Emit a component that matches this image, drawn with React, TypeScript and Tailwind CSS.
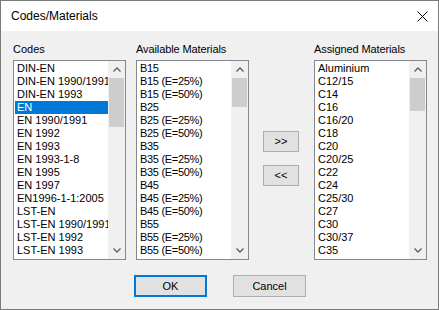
import React from "react";

const codes = [
  "DIN-EN",
  "DIN-EN 1990/1991",
  "DIN-EN 1993",
  "EN",
  "EN 1990/1991",
  "EN 1992",
  "EN 1993",
  "EN 1993-1-8",
  "EN 1995",
  "EN 1997",
  "EN1996-1-1:2005",
  "LST-EN",
  "LST-EN 1990/1991",
  "LST-EN 1992",
  "LST-EN 1993",
];

const available = [
  "B15",
  "B15 (E=25%)",
  "B15 (E=50%)",
  "B25",
  "B25 (E=25%)",
  "B25 (E=50%)",
  "B35",
  "B35 (E=25%)",
  "B35 (E=50%)",
  "B45",
  "B45 (E=25%)",
  "B45 (E=50%)",
  "B55",
  "B55 (E=25%)",
  "B55 (E=50%)",
];

const assigned = [
  "Aluminium",
  "C12/15",
  "C14",
  "C16",
  "C16/20",
  "C18",
  "C20",
  "C20/25",
  "C22",
  "C24",
  "C25/30",
  "C27",
  "C30",
  "C30/37",
  "C35",
];

function Chevron({ up }: { up?: boolean }) {
  return (
    <svg width="8" height="5" viewBox="0 0 8 5">
      <polyline
        points={up ? "0.5,4.5 4,1 7.5,4.5" : "0.5,0.5 4,4 7.5,0.5"}
        fill="none"
        stroke="#606060"
        strokeWidth="1.4"
      />
    </svg>
  );
}

function ListBox({
  items,
  selected,
  thumb,
  tight,
}: {
  items: string[];
  selected?: number;
  thumb: number;
  tight?: boolean;
}) {
  return (
    <div className="flex h-[200px] w-[113px] border border-[#828790] bg-white">
      <div className="min-w-0 flex-1 pl-[1px] pt-[1px]">
        {items.map((item, i) => (
          <div
            key={item}
            className={`h-[13px] overflow-hidden whitespace-nowrap pl-[2px] leading-[13px] ${
              tight ? "tracking-[-0.3px]" : ""
            } ${i === selected ? "bg-[#0078d7] text-white" : "text-black"}`}
          >
            {item}
          </div>
        ))}
      </div>
      <div className="flex w-[17px] flex-col bg-[#f0f0f0]">
        <div className="flex h-[17px] items-center justify-center">
          <Chevron up />
        </div>
        <div className="flex-1">
          <div className="mx-[1px] bg-[#cdcdcd]" style={{ height: thumb }} />
        </div>
        <div className="flex h-[17px] items-center justify-center">
          <Chevron />
        </div>
      </div>
    </div>
  );
}

export default function App() {
  return (
    <div className="flex h-[310px] w-[439px] flex-col border border-[#7a7a7a] font-['Liberation_Sans',Arial,sans-serif] text-[11px] text-black">
      {/* Title bar */}
      <div className="flex h-[30px] items-center justify-between bg-white pl-[10px] pr-[10px]">
        <span className="text-[12px]">Codes/Materials</span>
        <svg width="11" height="11" viewBox="0 0 11 11">
          <path d="M0.5 0.5 L10.5 10.5 M10.5 0.5 L0.5 10.5" stroke="#000" strokeWidth="1" />
        </svg>
      </div>

      <div className="flex-1 bg-[#f0f0f0] pl-[12px] pt-[12px]">
        <div className="flex">
          <div className="flex flex-col">
            <div className="mb-[4px] h-[13px] leading-[13px]">Codes</div>
            <ListBox items={codes} selected={3} thumb={49} />
          </div>
          <div className="ml-[10px] flex flex-col">
            <div className="mb-[4px] h-[13px] leading-[13px] tracking-[-0.1px]">
              Available Materials
            </div>
            <ListBox items={available} thumb={29} tight />
          </div>
          <div className="flex w-[65px] flex-col items-center pt-[88px]">
            <button className="mr-[1px] h-[21px] w-[36px] border border-[#adadad] bg-[#e1e1e1] leading-[19px]">
              &gt;&gt;
            </button>
            <button className="mr-[1px] mt-[13px] h-[21px] w-[36px] border border-[#adadad] bg-[#e1e1e1] leading-[19px]">
              &lt;&lt;
            </button>
          </div>
          <div className="flex flex-col">
            <div className="mb-[4px] h-[13px] leading-[13px] tracking-[-0.1px]">
              Assigned Materials
            </div>
            <ListBox items={assigned} thumb={33} />
          </div>
        </div>

        <div className="mt-[15px] flex pl-[121px]">
          <button className="h-[22px] w-[73px] border-2 border-[#0078d7] bg-[#e1e1e1] leading-[18px]">
            OK
          </button>
          <button className="ml-[26px] h-[22px] w-[73px] border border-[#adadad] bg-[#e1e1e1] leading-[20px]">
            Cancel
          </button>
        </div>
      </div>
    </div>
  );
}
